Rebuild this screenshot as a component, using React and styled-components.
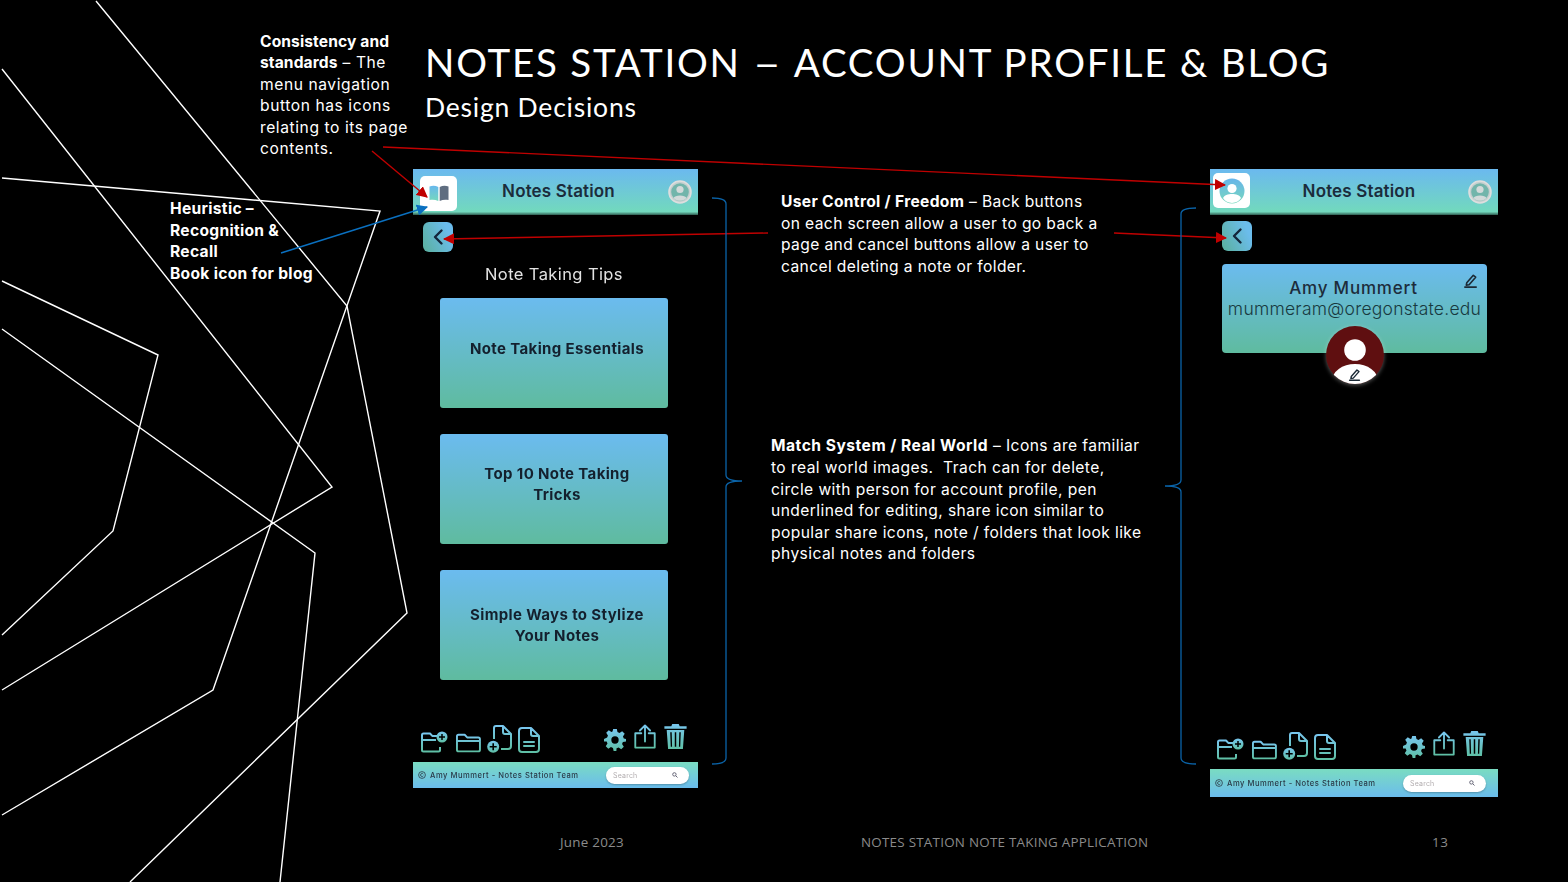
import React, { useId } from "react";
import styled, { createGlobalStyle } from "styled-components";

const Global = createGlobalStyle`
  html, body { margin: 0; padding: 0; background: #000; }
  * { box-sizing: border-box; }
`;

const Slide = styled.div`
  position: relative; width: 1568px; height: 882px; overflow: hidden;
  background: #000; color: #fff; display: flex; flex-direction: column;
  font-family: Inter, "Noto Sans", sans-serif;
`;
const Backdrop = styled.svg`
  position: absolute; inset: 0; width: 1568px; height: 882px; z-index: 0; pointer-events: none;
`;
const Overlay = styled(Backdrop)` z-index: 3; `;
const Body = styled.div`
  position: relative; z-index: 1; height: 832px; display: flex;
`;
const LeftNotes = styled.div`
  width: 413px; padding-top: 30.5px; display: flex; flex-direction: column;
`;
const Note = styled.p`
  margin: 0 0 0 ${p => p.$left}px; margin-top: ${p => p.$top || 0}px;
  font-size: 15.6px; line-height: 21.6px; font-weight: 400; letter-spacing: ${p => p.$track}px;
  color: #fff; white-space: nowrap;
  b { font-weight: 700; letter-spacing: ${p => p.$boldTrack}px; }
`;
const Main = styled.div`
  flex: 1; padding-top: 37px; display: flex; flex-direction: column;
`;
const Title = styled.h1`
  margin: 0 0 0 12px; font-family: Lato, sans-serif; font-weight: 400; font-size: 38.5px;
  line-height: 50px; letter-spacing: 1.77px; white-space: nowrap;
`;
const Dash = styled.span`
  display: inline-block; margin: 0 3.5px; transform: scaleX(1.25);
`;
const Subtitle = styled.h2`
  margin: 3px 0 0 12px; font-family: Lato, sans-serif; font-weight: 400; font-size: 26.5px;
  line-height: 34px; letter-spacing: 0.78px;
`;
const Stage = styled.div`
  margin-top: 45px; display: flex; align-items: flex-start;
`;
const MiddleNotes = styled.div`
  width: 512px; padding-top: 22px; display: flex; flex-direction: column;
`;
const Phone = styled.section`
  width: ${p => p.$width}px; height: ${p => p.$height}px; display: flex; flex-direction: column;
  filter: blur(0.35px); font-family: Inter, sans-serif;
`;
const Header = styled.header`
  height: 46px; flex: none; display: flex; align-items: center;
  padding: 0 ${p => p.$right}px 0 ${p => p.$left}px;
  background: linear-gradient(180deg, #6bb9ef 0%, #72d9bd 93%, #2f5a4f 100%);
`;
const AppIcon = styled.div`
  width: 37px; height: 35px; flex: none; background: #fff; border-radius: 5px;
  display: flex; align-items: center; justify-content: center;
  margin-top: ${p => p.$shift}px;
`;
const AppName = styled.div`
  flex: 1; text-align: center; font-size: 17px; font-weight: 600; color: #1b2c3c;
  letter-spacing: 0.15px; padding: 0 ${p => p.$pad}px 2px 0;
`;
const BackButton = styled.div`
  width: 30px; height: 30px; margin: ${p => p.$top}px 0 0 ${p => p.$left}px; border-radius: 6px;
  background: linear-gradient(65deg, #5cb1a6 10%, #6bbcec 80%);
  display: flex; align-items: center; justify-content: center; flex: none;
`;
const SectionLabel = styled.div`
  margin-top: 12px; height: 20px; line-height: 20px; text-align: center; font-size: 16.5px;
  color: #e3e3e3; padding-right: 3px; letter-spacing: 0.4px;
`;
const CardStack = styled.div`
  margin: 13.5px 0 0 27px; width: 228px; display: flex; flex-direction: column; gap: 26px;
`;
const TipCard = styled.div`
  height: 110px; border-radius: 3px; padding: ${p => p.$up < 0 ? -p.$up : 0}px 0 ${p => p.$up > 0 ? p.$up : 0}px 6px;
  background: linear-gradient(180deg, #6bbbef 0%, #5fbb9f 100%);
  display: flex; align-items: center; justify-content: center; text-align: center;
  font-size: 15px; line-height: 20.5px; font-weight: 700; color: #14202e;
  letter-spacing: 0.36px; white-space: nowrap;
`;
const ProfileCard = styled.div`
  position: relative; width: 265px; height: 89px; margin: 13px 0 0 12px; border-radius: 4px;
  background: linear-gradient(180deg, #6bbbef 0%, #5fbb9f 100%);
  padding-top: 14px; text-align: center; color: #1d2c3b;
`;
const ProfileName = styled.div`
  font-size: 17px; line-height: 20px; font-weight: 500; letter-spacing: 0.8px; padding-right: 2px;
`;
const ProfileMail = styled.div`
  font-size: 17.5px; line-height: 21px; font-weight: 300; letter-spacing: 0.25px; white-space: nowrap; color: #18393f;
`;
const EditPin = styled.div`
  position: absolute; top: 8px; right: 9px; width: 15px; height: 16px;
`;
const AvatarPin = styled.div`
  position: absolute; left: 103px; top: 61px; width: 60px; height: 60px;
  filter: drop-shadow(0 1px 2px rgba(255,255,255,.35));
`;
const Tools = styled.div`
  margin-top: auto; display: flex; justify-content: space-between; align-items: flex-end;
  padding: 0 ${p => p.$right}px ${p => p.$bottom}px ${p => p.$left}px;
`;
const LeftTools = styled.div`
  display: flex; align-items: flex-end; gap: 6px;
  svg:first-child { margin-right: 2px; }
`;
const RightTools = styled.div`
  display: flex; align-items: flex-end; gap: 6px; margin-bottom: ${p => p.$lift}px;
  svg:first-child { margin: 0 1px -2px 0; }
`;
const FootBar = styled.footer`
  height: ${p => p.$height}px; flex: none; display: flex; align-items: center; justify-content: space-between;
  padding: 0 ${p => p.$right}px 0 5px; background: linear-gradient(180deg, #7adcc2 0%, #6bbcec 100%);
  font-size: 7.6px; font-weight: 500; color: #2a3a48; letter-spacing: 0.52px;
`;
const Credit = styled.div`
  display: flex; align-items: center; gap: 4px;
`;
const SearchPill = styled.div`
  width: 83px; height: 17px; border-radius: 9px; background: #fff; box-shadow: 0 1px 2px rgba(0,0,0,.25);
  display: flex; align-items: center; justify-content: space-between; padding: 0 11px 0 7px;
  font-size: 7px; font-weight: 400; color: #b3aeb0; letter-spacing: 0.2px;
`;
const Foot = styled.footer`
  position: relative; z-index: 1; height: 20px; display: grid; grid-template-columns: 560px 301px 571px auto;
  align-items: center; font-family: "Open Sans", sans-serif; font-size: 13.4px; color: #8b8b8b;
`;
const Cell = styled.div`
  grid-column: ${p => p.$col}; white-space: nowrap; letter-spacing: ${p => p.$track}px;
`;

const Grad = ({ id }) => (
  <defs>
    <linearGradient id={id} x1="0" y1="0" x2="0" y2="1">
      <stop offset="0" stopColor="#78c6ee" />
      <stop offset="1" stopColor="#5fc0a6" />
    </linearGradient>
  </defs>
);
const Tool = ({ w, h, vb, children }) => {
  const id = useId().replace(/[^a-zA-Z0-9]/g, "");
  return (
    <svg width={w} height={h} viewBox={vb} fill="none" stroke={`url(#${id})`} strokeWidth="2" strokeLinejoin="round" strokeLinecap="round">
      <Grad id={id} />
      {children}
    </svg>
  );
};
const FolderPlus = () => {
  const id = useId().replace(/[^a-zA-Z0-9]/g, "");
  return (
    <svg width="27" height="23" viewBox="0 0 27 23" fill="none" strokeWidth="2" strokeLinejoin="round">
      <Grad id={id} />
      <path d="M1 20V5q0-1.500 1.500-1.500H9l2.500 2.600h4.500M1 10h14M1 20q0 1.500 1.500 1.500h15q1.500 0 1.500-1.500v-3" stroke={`url(#${id})`} />
      <circle cx="21" cy="7" r="5.500" fill={`url(#${id})`} strokeWidth="0" />
      <path d="M21 4v6M18 7h6" stroke="#000" strokeWidth="1.500" />
    </svg>
  );
};
const Folder = () => (
  <Tool w="25" h="20" vb="0 0 26 20">
    <path d="M1 17V3q0-1.600 1.600-1.600H9l2.600 2.800h11.500q1.800 0 1.800 1.800V17q0 1.700-1.700 1.700H2.700Q1 18.700 1 17zM1 8h24" />
  </Tool>
);
const FilePlus = () => {
  const id = useId().replace(/[^a-zA-Z0-9]/g, "");
  return (
    <svg width="25" height="28" viewBox="0 0 25 28" fill="none" strokeWidth="2" strokeLinejoin="round">
      <Grad id={id} />
      <path d="M7 14V3q0-2 2-2h7l8 8v12q0 3-3 3h-7M16 1v6q0 2 2 2h6" stroke={`url(#${id})`} />
      <circle cx="6.200" cy="21.800" r="6" fill={`url(#${id})`} strokeWidth="0" />
      <path d="M6.200 18.300v7M2.700 21.800h7" stroke="#000" strokeWidth="1.600" />
    </svg>
  );
};
const FileDoc = () => (
  <Tool w="22" h="26" vb="0 0 22 26">
    <path d="M1 4q0-3 3-3h9l8 8v13q0 3-3 3H4q-3 0-3-3zM13 1v6q0 2 2 2h6M6 15h10M6 19h10" />
  </Tool>
);
const Gear = () => {
  const id = useId().replace(/[^a-zA-Z0-9]/g, "");
  return (
    <svg width="22" height="22" viewBox="0 0 24 24">
      <Grad id={id} />
      <path fill={`url(#${id})`} fillRule="evenodd" d="M10 0h4l.7 3.400 2.200.9 2.900-1.900 2.800 2.800-1.900 2.900.9 2.200L24 11v2.500l-3.400.7-.9 2.200 1.900 2.900-2.800 2.800-2.900-1.900-2.200.9L13.500 24h-3l-.7-3.400-2.200-.9-2.900 1.900-2.800-2.800 1.900-2.900-.9-2.200L0 13.500V11l3.400-1.700.9-2.200L2.400 4.200l2.800-2.800 2.900 1.900 1.200-.5zM12 8a4 4 0 100 8 4 4 0 000-8z" />
    </svg>
  );
};
const Share = () => (
  <Tool w="24" h="25" vb="0 0 24 27">
    <path d="M8 10H1.500v15.500h21V10H16M12 19V2M6.500 7 12 1.500 17.500 7" />
  </Tool>
);
const Trash = () => {
  const id = useId().replace(/[^a-zA-Z0-9]/g, "");
  return (
    <svg width="25" height="25" viewBox="0 0 25 27">
      <Grad id={id} />
      <path fill={`url(#${id})`} d="M9 0h7l1 2.500h7.500v2.500H.5V2.500H8zM3 6.500h19L20.500 27h-16zM6.800 9l.6 15.500h1.400L8.400 9zm4.900 0v15.500h1.600V9zM16.600 9l-.4 15.500h1.400L18.200 9z" fillRule="evenodd" />
    </svg>
  );
};

const Chevron = () => (
  <svg width="14" height="18" viewBox="0 0 14 18" fill="none" stroke="#14253a" strokeWidth="2.400" strokeLinecap="round" strokeLinejoin="round">
    <path d="M10.500 2.500 4 9l6.500 6.500" />
  </svg>
);
const UserBadge = () => (
  <svg width="24" height="24" viewBox="0 0 24 24">
    <circle cx="12" cy="12" r="11" fill="#c5cfcf" stroke="#dedede" strokeWidth="1.600" />
    <circle cx="12" cy="12" r="8.800" fill="#72b5ab" />
    <circle cx="12" cy="9.500" r="3.600" fill="#d3dada" />
    <path d="M5.500 18c1-3.500 12-3.500 13 0-3 3.500-10 3.500-13 0z" fill="#d3dada" />
  </svg>
);
const BookIcon = () => {
  const id = useId().replace(/[^a-zA-Z0-9]/g, "");
  return (
    <svg width="20" height="16" viewBox="0 0 20 16">
      <defs>
        <linearGradient id={id} x1="0" y1="0" x2="0" y2="1">
          <stop offset="0" stopColor="#67b8ec" /><stop offset="1" stopColor="#74d8bd" />
        </linearGradient>
      </defs>
      <path d="M.5 1.500C3.500.5 6.500.6 9.300 2v14C6.500 14.600 3.500 14.400.5 15z" fill={`url(#${id})`} />
      <path d="M19.500 1.500C16.500.5 13.500.6 10.700 2v14c2.800-1.400 5.800-1.600 8.800-1z" fill="#5f6d80" />
    </svg>
  );
};
const ProfileIcon = () => {
  const id = useId().replace(/[^a-zA-Z0-9]/g, "");
  return (
    <svg width="26" height="26" viewBox="0 0 26 26">
      <defs>
        <linearGradient id={id} x1="0" y1="0" x2="0" y2="1">
          <stop offset="0" stopColor="#67b5ea" /><stop offset="1" stopColor="#78d8bd" />
        </linearGradient>
      </defs>
      <circle cx="13" cy="13" r="12.500" fill={`url(#${id})`} />
      <circle cx="13" cy="10.500" r="4.600" fill="#fff" />
      <path d="M4 20c2-5.500 16-5.500 18 0-4 6.500-14 6.500-18 0z" fill="#fff" />
    </svg>
  );
};
const Pencil = ({ size = 15 }) => (
  <svg width={size} height={size} viewBox="0 0 15 16" fill="none" stroke="#1c2a36" strokeLinecap="round" strokeLinejoin="round">
    <path d="M3.500 10.500 10.500 2.500l2.500 2-7 8-3 .5z" strokeWidth="1.700" />
    <path d="M1.500 15h12" strokeWidth="1.800" />
  </svg>
);
const ProfileAvatar = () => (
  <svg width="60" height="60" viewBox="0 0 60 60">
    <defs>
      <clipPath id="avatarClip"><circle cx="30" cy="30" r="29" /></clipPath>
    </defs>
    <circle cx="30" cy="30" r="29" fill="#5f0f10" />
    <g clipPath="url(#avatarClip)">
      <circle cx="30" cy="25" r="10.800" fill="#fff" />
      <ellipse cx="30" cy="56" rx="23" ry="17" fill="#fff" />
    </g>
    <g transform="translate(23 43)"><Pencil size="13" /></g>
  </svg>
);
const SearchGlyph = () => (
  <svg width="6" height="6" viewBox="0 0 6 6" fill="none" stroke="#667" strokeWidth="1">
    <circle cx="2.400" cy="2.400" r="1.700" /><path d="M3.800 3.800 5.500 5.500" />
  </svg>
);
const CopyGlyph = () => (
  <svg width="8" height="8" viewBox="0 0 8 8" fill="none" stroke="#2a3a48" strokeWidth=".8">
    <circle cx="4" cy="4" r="3.400" /><path d="M5.300 3.200a1.500 1.500 0 100 1.600" />
  </svg>
);

const ToolRow = ({ left, right, bottom, lift }) => (
  <Tools $left={left} $right={right} $bottom={bottom}>
    <LeftTools>
      <FolderPlus /><Folder /><FilePlus /><FileDoc />
    </LeftTools>
    <RightTools $lift={lift}>
      <Gear /><Share /><Trash />
    </RightTools>
  </Tools>
);
const Bar = ({ height, right }) => (
  <FootBar $height={height} $right={right}>
    <Credit><CopyGlyph /><span>Amy Mummert - Notes Station Team</span></Credit>
    <SearchPill><span>Search</span><SearchGlyph /></SearchPill>
  </FootBar>
);

const Arrow = ({ id, color }) => (
  <marker id={id} viewBox="0 0 10 10" refX="9" refY="5" markerWidth="8" markerHeight="8" orient="auto">
    <path d="M0 0 10 5 0 10z" fill={color} />
  </marker>
);

export default function App() {
  return (
    <Slide>
      <Global />
      <Backdrop viewBox="0 0 1568 882" fill="none" stroke="#fff" strokeWidth="1.400">
        <polyline points="96,1 347,306 407,613 130,882" />
        <polyline points="2,69 332,487 2,690" />
        <polyline points="2,178 380,211 213,690 2,815" />
        <polyline points="2,281 158,355 113,531 2,635" />
        <polyline points="2,329 315,553 280,882" />
      </Backdrop>
      <Body>
        <LeftNotes>
          <Note $left={260} $track={0.58} $boldTrack={0.1}>
            <b>Consistency and<br />standards</b> – The<br />menu navigation<br />button has icons<br />relating to its page<br />contents.
          </Note>
          <Note $left={170} $top={38} $track={0.58} $boldTrack={0.3}>
            <b>Heuristic –<br />Recognition &amp;<br />Recall<br />Book icon for blog</b>
          </Note>
        </LeftNotes>
        <Main>
          <Title>NOTES STATION <Dash>–</Dash> ACCOUNT PROFILE &amp; BLOG</Title>
          <Subtitle>Design Decisions</Subtitle>
          <Stage>
            <Phone $width={285} $height={619}>
              <Header $left={7} $right={6}>
                <AppIcon $shift={2}><BookIcon /></AppIcon>
                <AppName $pad={8}>Notes Station</AppName>
                <UserBadge />
              </Header>
              <BackButton $top={7} $left={10}><Chevron /></BackButton>
              <SectionLabel>Note Taking Tips</SectionLabel>
              <CardStack>
                <TipCard $up={6}><span>Note Taking Essentials</span></TipCard>
                <TipCard $up={8}><span>Top 10 Note Taking<br />Tricks</span></TipCard>
                <TipCard $up={-2}><span>Simple Ways to Stylize<br />Your Notes</span></TipCard>
              </CardStack>
              <ToolRow left={8} right={10} bottom={9} lift={4} />
              <Bar height={26} right={9} />
            </Phone>
            <MiddleNotes>
              <Note $left={83} $track={0.38} $boldTrack={0.32}>
                <b>User Control / Freedom</b> – Back buttons<br />on each screen allow a user to go back a<br />page and cancel buttons allow a user to<br />cancel deleting a note or folder.
              </Note>
              <Note $left={73} $top={158} $track={0.42} $boldTrack={0.5}>
                <b>Match System / Real World</b> – Icons are familiar<br />to real world images.&nbsp; Trach can for delete,<br />circle with person for account profile, pen<br />underlined for editing, share icon similar to<br />popular share icons, note / folders that look like<br />physical notes and folders
              </Note>
            </MiddleNotes>
            <Phone $width={288} $height={628}>
              <Header $left={3} $right={6}>
                <AppIcon $shift={-3}><ProfileIcon /></AppIcon>
                <AppName $pad={0}>Notes Station</AppName>
                <UserBadge />
              </Header>
              <BackButton $top={6} $left={12}><Chevron /></BackButton>
              <ProfileCard>
                <ProfileName>Amy Mummert</ProfileName>
                <ProfileMail>mummeram@oregonstate.edu</ProfileMail>
                <EditPin><Pencil /></EditPin>
                <AvatarPin><ProfileAvatar /></AvatarPin>
              </ProfileCard>
              <ToolRow left={7} right={11} bottom={9} lift={4} />
              <Bar height={28} right={12} />
            </Phone>
          </Stage>
        </Main>
      </Body>
      <Foot>
        <Cell $col={2} $track={0.25}>June 2023</Cell>
        <Cell $col={3} $track={0.25}>NOTES STATION NOTE TAKING APPLICATION</Cell>
        <Cell $col={4} $track={0.6}>13</Cell>
      </Foot>
      <Overlay viewBox="0 0 1568 882" fill="none">
        <defs>
          <Arrow id="redHead" color="#c00000" />
          <Arrow id="blueHead" color="#0a70c0" />
        </defs>
        <g stroke="#c00000" strokeWidth="1.400">
          <line x1="372" y1="151" x2="427" y2="197" markerEnd="url(#redHead)" />
          <line x1="383" y1="147" x2="1225" y2="185" markerEnd="url(#redHead)" />
          <line x1="768" y1="233" x2="444" y2="239" markerEnd="url(#redHead)" />
          <line x1="1114" y1="233" x2="1226" y2="238" markerEnd="url(#redHead)" />
        </g>
        <line x1="281" y1="253" x2="427" y2="207" stroke="#0a70c0" strokeWidth="1.400" markerEnd="url(#blueHead)" />
        <g stroke="#0a63a8" strokeWidth="1.300">
          <path d="M712 198q14 0 14 6V475q0 6 16 6-16 0-16 6V758q0 6-14 6" />
          <path d="M1196 208q-15 0-15 6V480q0 6-16 6 16 0 16 6V758q0 6 15 6" />
        </g>
      </Overlay>
    </Slide>
  );
}
